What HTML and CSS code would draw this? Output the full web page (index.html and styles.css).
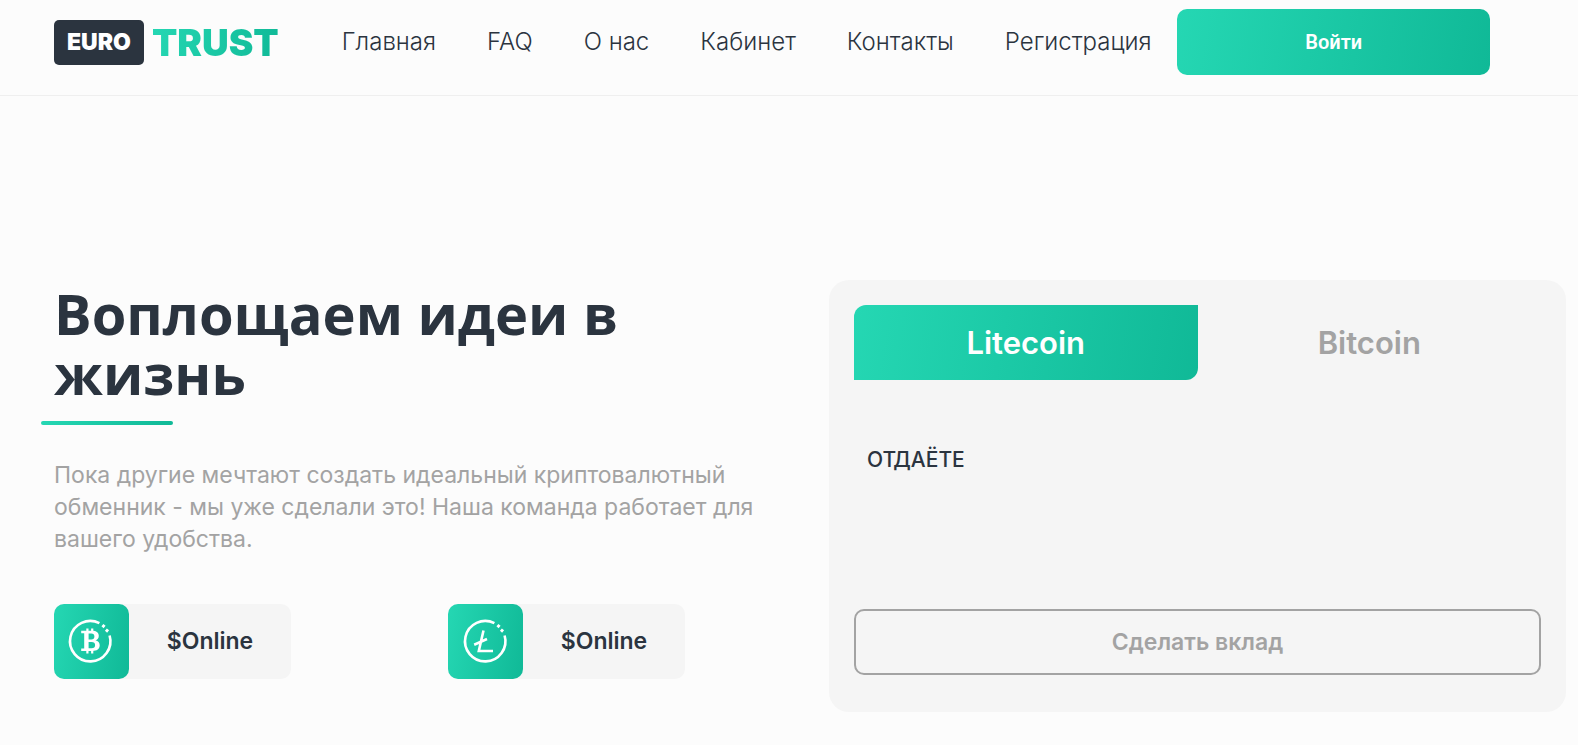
FILE: index.html
```html
<!DOCTYPE html>
<html lang="ru">
<head>
<meta charset="utf-8">
<meta name="viewport" content="width=device-width, initial-scale=1">
<title>Euro Trust</title>
<link rel="stylesheet" href="styles.css">
</head>
<body>
<header class="header">
  <a class="logo" href="#"><span class="logo-badge">EURO</span><span class="logo-name">TRUST</span></a>
  <nav class="nav">
    <a href="#">Главная</a>
    <a href="#">FAQ</a>
    <a href="#">О нас</a>
    <a href="#">Кабинет</a>
    <a href="#">Контакты</a>
    <a href="#">Регистрация</a>
  </nav>
  <button class="login" type="button">Войти</button>
</header>
<main class="hero">
  <section class="intro">
    <h1 class="title">Воплощаем идеи в жизнь</h1>
    <p class="lead">Пока другие мечтают создать идеальный криптовалютный обменник - мы уже сделали это! Наша команда работает для вашего удобства.</p>
    <div class="coins">
      <div class="coin">
        <span class="coin-icon">
          <svg viewBox="2 1 44 44" width="44" height="44" aria-hidden="true">
            <g fill="none" stroke="#fff">
              <path d="M31.4 4.2A20.2 20.2 0 1 0 41.6 16.5" stroke-width="2.6"/>
              <path d="M34.4 6.1l2.2 1.9M37.9 10.6l2.2 1.9" stroke-width="3"/>
              <path d="M19.4 9.5v3.5M24.2 9.5v3.5M19.4 31v3.5M24.2 31v3.5" stroke-width="2.2"/>
            </g>
            <path fill="#fff" fill-rule="evenodd" d="M13.2 11.800H24C28.500 11.800 30.800 13.800 30.800 16.800C30.800 19.200 29.500 20.700 27.500 21.300C30.200 21.900 31.700 23.700 31.700 26.300C31.700 30 28.900 32 24.500 32H13.200V29.500H16.200V14.300H13.200ZM20.600 14.500V20.500H23.300C25.400 20.500 26.400 19.400 26.400 17.500C26.400 15.500 25.400 14.500 23.300 14.500ZM20.600 23V29.300H23.500C26 29.300 27.100 28.200 27.100 26.100C27.100 24.100 26 23 23.500 23Z"/>
          </svg>
        </span>
        <span class="coin-label">$Online</span>
      </div>
      <div class="coin">
        <span class="coin-icon">
          <svg viewBox="1 1 44 44" width="44" height="44" fill="none" stroke="#fff" aria-hidden="true">
            <path d="M31.4 4.2A20.2 20.2 0 1 0 41.6 16.5" stroke-width="2.6"/>
            <path d="M34.4 6.1l2.2 1.9M37.9 10.6l2.2 1.9" stroke-width="3"/>
            <path d="M20.5 11.5L15.8 32H30M11.2 25.7L24 20" stroke-width="2.6"/>
          </svg>
        </span>
        <span class="coin-label">$Online</span>
      </div>
    </div>
  </section>
  <section class="exchange">
    <div class="tabs" role="tablist">
      <button class="tab tab-active" type="button" role="tab" aria-selected="true">Litecoin</button>
      <button class="tab" type="button" role="tab" aria-selected="false">Bitcoin</button>
    </div>
    <p class="give">ОТДАЁТЕ</p>
    <button class="deposit" type="button">Сделать вклад</button>
  </section>
</main>
</body>
</html>
```
FILE: styles.css
```css
* { box-sizing: border-box; }
:root {
  --dark: #2b343f;
  --grey: #a3a3a3;
  --panel: #f5f5f5;
  --green: linear-gradient(100deg, #25d7b3, #10b997);
}
body {
  margin: 0;
  background: #fcfcfc;
  color: var(--dark);
  font-family: Inter, "Open Sans", sans-serif;
  font-size: 23px;
}
button { border: 0; font-family: inherit; cursor: pointer; }
.header {
  display: flex;
  align-items: center;
  padding: 9px 88px 20px 54px;
  border-bottom: 1px solid #efefef;
}
.logo {
  display: flex;
  align-items: center;
  gap: 8px;
  margin-right: 63px;
  font-weight: 900;
  text-decoration: none;
}
.logo-badge {
  padding: 0 13px;
  border-radius: 5px;
  background: var(--dark);
  color: #fff;
  font-size: 23px;
  line-height: 45px;
}
.logo-name {
  background: var(--green);
  background-clip: text;
  -webkit-background-clip: text;
  color: transparent;
  font-size: 37px;
  line-height: 45px;
}
.nav { display: flex; gap: 51px; font-size: 24px; line-height: 30px; white-space: nowrap; }
.nav a { color: var(--dark); font-weight: 300; text-decoration: none; }
.login {
  flex: 1;
  height: 66px;
  margin-left: 26px;
  border-radius: 10px;
  background: var(--green);
  color: #fff;
  font-family: Roboto, sans-serif;
  font-size: 20px;
  font-weight: 600;
}
.hero {
  display: grid;
  grid-template-columns: 1fr 1fr;
  gap: 38px;
  padding: 184px 12px 34px 54px;
}
.title {
  margin: 3px 0 0;
  font-family: "Open Sans", "Noto Sans", sans-serif;
  font-size: 56px;
  font-weight: 700;
  line-height: 60px;
}
.title::after {
  content: "";
  display: block;
  width: 132px;
  height: 4px;
  margin: 18px 0 0 -13px;
  border-radius: 2px;
  background: var(--green);
}
.lead {
  margin: 34px 0 0;
  color: var(--grey);
  font-weight: 400;
  line-height: 32px;
}
.coins {
  display: grid;
  grid-template-columns: 1fr 1fr;
  gap: 51px;
  margin-top: 49px;
}
.coin {
  display: flex;
  width: 237px;
  border-radius: 10px;
  background: var(--panel);
}
.coin-icon {
  display: grid;
  place-items: center;
  width: 75px;
  height: 75px;
  border-radius: 10px;
  background: var(--green);
}
.coin-icon svg { overflow: visible; }
.coin-label { flex: 1; font-weight: 600; line-height: 75px; text-align: center; }
.exchange {
  display: flex;
  flex-direction: column;
  padding: 25px 25px 37px;
  border-radius: 20px;
  background: var(--panel);
}
.tabs { display: grid; grid-template-columns: 1fr 1fr; }
.tab {
  height: 75px;
  border-radius: 12px 0;
  background: none;
  color: var(--grey);
  font-size: 31px;
  font-weight: 600;
}
.tab-active { background: var(--green); color: #fff; }
.give { margin: 67px 13px 137px; font-size: 21px; font-weight: 500; line-height: 25px; }
.deposit {
  height: 66px;
  border: 2px solid var(--grey);
  border-radius: 10px;
  background: none;
  color: var(--grey);
  font-size: 23px;
  font-weight: 600;
}
```
